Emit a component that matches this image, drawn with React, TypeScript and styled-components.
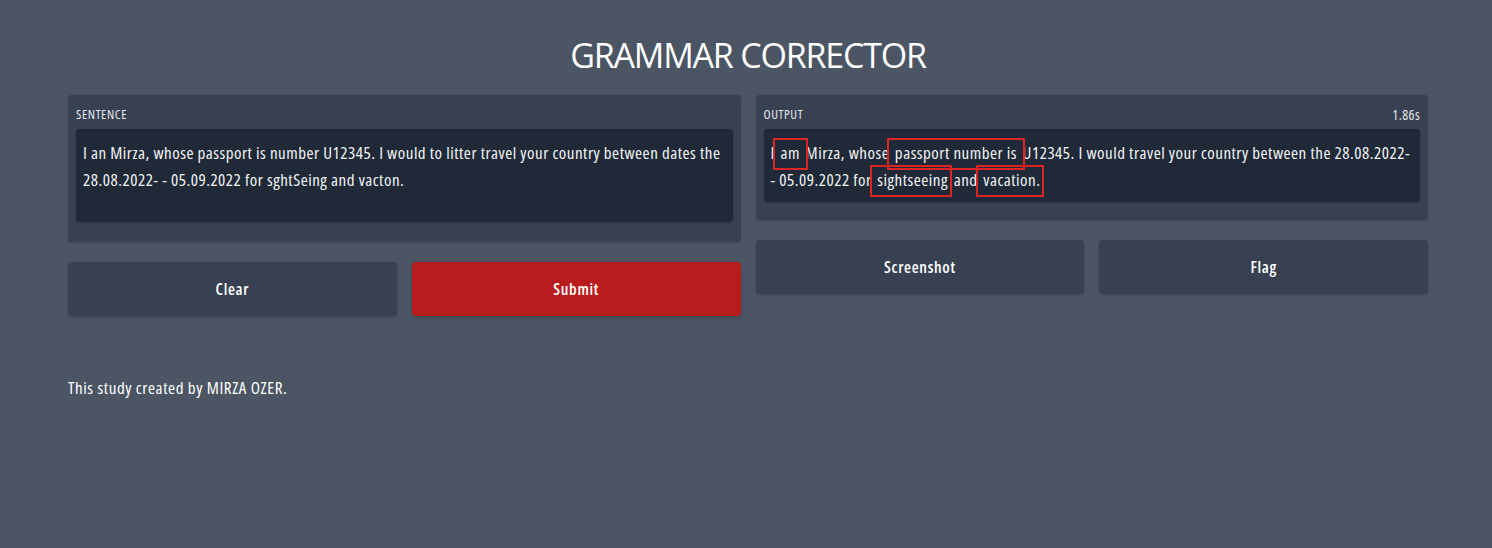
import styled, { createGlobalStyle } from "styled-components";

const GlobalStyle = createGlobalStyle`
  html, body {
    margin: 0;
    padding: 0;
    background: #4b5563;
  }
  body {
    font-family: "Open Sans", "Noto Sans", sans-serif;
    font-stretch: 75%;
    color: #f3f4f6;
  }
`;

export const Page = styled.div`
  width: 1492px;
  height: 548px;
  box-sizing: border-box;
  padding: 30px 64px 0 68px;
  background: #4b5563;
`;

export const Title = styled.h1`
  margin: 0 0 15px 0;
  text-align: center;
  font-size: 34px;
  font-stretch: 100%;
  font-weight: 400;
  letter-spacing: -1.2px;
  line-height: 50px;
  color: #ffffff;
`;

export const Columns = styled.div`
  display: grid;
  grid-template-columns: 1fr 1fr;
  gap: 15px;
  align-items: start;
`;

export const Column = styled.div`
  display: flex;
  flex-direction: column;
  gap: 20px;
`;

export const Panel = styled.div`
  background: #374151;
  border-radius: 4px;
  padding: 7px 8px ${(p: { $bottom: number }) => p.$bottom}px 8px;
  box-shadow: 0 1px 2px rgba(0, 0, 0, 0.15);
`;

export const LabelRow = styled.div`
  display: flex;
  justify-content: space-between;
  align-items: center;
  height: 24px;
  margin-bottom: 3px;
  font-size: 13px;
  letter-spacing: 0.6px;
  color: #e5e7eb;
`;

export const Label = styled.span`
  text-transform: uppercase;
`;

export const Timer = styled.span`
  font-size: 14px;
  letter-spacing: 0.4px;
`;

export const TextBox = styled.div`
  background: #1f2937;
  border-radius: 4px;
  padding: 10px 7px 0 7px;
  height: ${(p: { $height: number }) => p.$height}px;
  box-sizing: border-box;
  font-size: 17px;
  letter-spacing: 0.5px;
  line-height: 27px;
  color: #f3f4f6;
  box-shadow: 0 1px 2px rgba(0, 0, 0, 0.2);
`;

export const Mark = styled.span`
  outline: 2px solid #dc2626;
  padding: 1px 2px 4px 2px;
`;

export const ButtonRow = styled.div`
  display: grid;
  grid-template-columns: 1fr 1fr;
  gap: 15px;
`;

export const Button = styled.button<{ $primary?: boolean }>`
  height: 54px;
  border: none;
  border-radius: 4px;
  font-family: "Open Sans", "Noto Sans", sans-serif;
  font-stretch: 75%;
  font-size: 16px;
  font-weight: 600;
  letter-spacing: 0.7px;
  color: #ffffff;
  background: ${(p) => (p.$primary ? "#b91c1c" : "#374151")};
  box-shadow: 0 1px 3px rgba(0, 0, 0, 0.2);
  cursor: pointer;
`;

export const Footer = styled.p`
  margin: 0;
  padding-top: 60px;
  font-size: 17px;
  letter-spacing: 0.6px;
  color: #ffffff;
`;

export default function App() {
  return (
    <>
      <GlobalStyle />
      <Page>
        <Title>GRAMMAR CORRECTOR</Title>
        <Columns>
          <Column>
            <Panel $bottom={20}>
              <LabelRow>
                <Label>Sentence</Label>
              </LabelRow>
              <TextBox $height={93}>
                I an Mirza, whose passport is number U12345. I would to litter
                travel your country between dates the 28.08.2022- - 05.09.2022
                for sghtSeing and vacton.
              </TextBox>
            </Panel>
            <ButtonRow>
              <Button>Clear</Button>
              <Button $primary>Submit</Button>
            </ButtonRow>
          </Column>
          <Column>
            <Panel $bottom={18}>
              <LabelRow>
                <Label>Output</Label>
                <Timer>1.86s</Timer>
              </LabelRow>
              <TextBox $height={73}>
                I<Mark> am </Mark>Mirza, whose<Mark> passport number is </Mark>
                U12345. I would travel your country between the 28.08.2022- -
                05.09.2022 for<Mark> sightseeing</Mark> and<Mark> vacation.</Mark>
              </TextBox>
            </Panel>
            <ButtonRow>
              <Button>Screenshot</Button>
              <Button>Flag</Button>
            </ButtonRow>
          </Column>
        </Columns>
        <Footer>This study created by MIRZA OZER.</Footer>
      </Page>
    </>
  );
}
